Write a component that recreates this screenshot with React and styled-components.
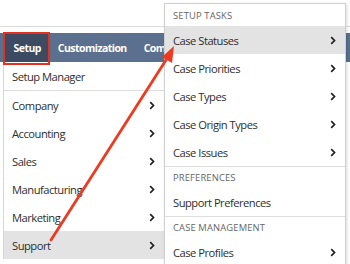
import React from "react";
import styled, { createGlobalStyle } from "styled-components";

const Global = createGlobalStyle`
  html, body { margin: 0; padding: 0; background: #fff; }
  body { font-family: "Open Sans", "Liberation Sans", sans-serif; }
  * { box-sizing: border-box; }
`;

const Page = styled.div`
  position: relative;
  width: 350px;
  height: 264px;
  overflow: hidden;
  background: #fff;
`;

const TopStrip = styled.div`
  height: 27px;
  border-bottom: 1px solid #dcdcdc;
`;

const NavBar = styled.div`
  margin-top: 6px;
  height: 29px;
  background: #5b6f8f;
  display: flex;
  align-items: stretch;
  padding-left: 5px;
`;

const Tab = styled.div`
  display: flex;
  align-items: center;
  padding: 0 8.5px;
  font-size: 10.5px;
  letter-spacing: -0.55px;
  font-weight: 700;
  color: #fff;
  background: ${(p) => (p.$active ? "#3c4a62" : "transparent")};
`;

const Body = styled.div`
  display: flex;
  padding-left: 3px;
`;

const LeftMenu = styled.div`
  width: 161px;
  background: #fff;
  border-left: 1px solid #d6d6d6;
`;

const Item = styled.div`
  height: 28px;
  display: flex;
  align-items: center;
  justify-content: space-between;
  padding: 0 9px 0 8px;
  font-size: 11.2px;
  letter-spacing: -0.5px;
  color: #2e2e2e;
  background: ${(p) => (p.$active ? "#e3e3e3" : "transparent")};
`;

const Sep = styled.div`
  height: 1px;
  background: #dedede;
`;

const RightMenu = styled.div`
  position: absolute;
  left: 164px;
  top: 3px;
  width: 182px;
  background: #fff;
  border: 1px solid #d0d0d0;
  box-shadow: 1px 1px 3px rgba(0, 0, 0, 0.15);
`;

const Header = styled.div`
  height: ${(p) => (p.$first ? 22 : 21)}px;
  display: flex;
  align-items: center;
  padding: 0 8px;
  font-size: 9.4px;
  letter-spacing: 0.15px;
  color: #666;
  text-transform: uppercase;
`;

const RedBox = styled.div`
  position: absolute;
  left: 3px;
  top: 32px;
  width: 47px;
  height: 33px;
  border: 2px solid #e3301f;
`;

const ArrowSvg = styled.svg`
  position: absolute;
  left: 0;
  top: 0;
  pointer-events: none;
`;

const Chevron = () => (
  <svg width="6" height="9" viewBox="0 0 6 9">
    <polyline points="1.2,1.2 4.5,4.5 1.2,7.8" fill="none" stroke="#222" strokeWidth="1.7" />
  </svg>
);

const leftItems = ["Company", "Accounting", "Sales", "Manufacturing", "Marketing", "Support"];

export default function App() {
  return (
    <>
      <Global />
      <Page>
        <TopStrip />
        <NavBar>
          <Tab $active>Setup</Tab>
          <Tab>Customization</Tab>
          <Tab>Commerce</Tab>
        </NavBar>
        <Body>
          <LeftMenu>
            <Item>Setup Manager</Item>
            <Sep />
            {leftItems.map((t) => (
              <Item key={t} $active={t === "Support"}>
                {t}
                <Chevron />
              </Item>
            ))}
          </LeftMenu>
        </Body>
        <RightMenu>
          <Header $first>Setup Tasks</Header>
          <Item $active>Case Statuses<Chevron /></Item>
          <Item>Case Priorities<Chevron /></Item>
          <Item>Case Types<Chevron /></Item>
          <Item>Case Origin Types<Chevron /></Item>
          <Item>Case Issues<Chevron /></Item>
          <Sep />
          <Header>Preferences</Header>
          <Item>Support Preferences</Item>
          <Sep />
          <Header>Case Management</Header>
          <Item>Case Profiles<Chevron /></Item>
        </RightMenu>
        <RedBox />
        <ArrowSvg width="350" height="264" viewBox="0 0 350 264">
          <line x1="51" y1="240" x2="166" y2="60" stroke="#f03a1f" strokeWidth="2.8" strokeLinecap="round" />
          <polygon points="174,46 162,57 172,63" fill="#f03a1f" />
        </ArrowSvg>
      </Page>
    </>
  );
}
